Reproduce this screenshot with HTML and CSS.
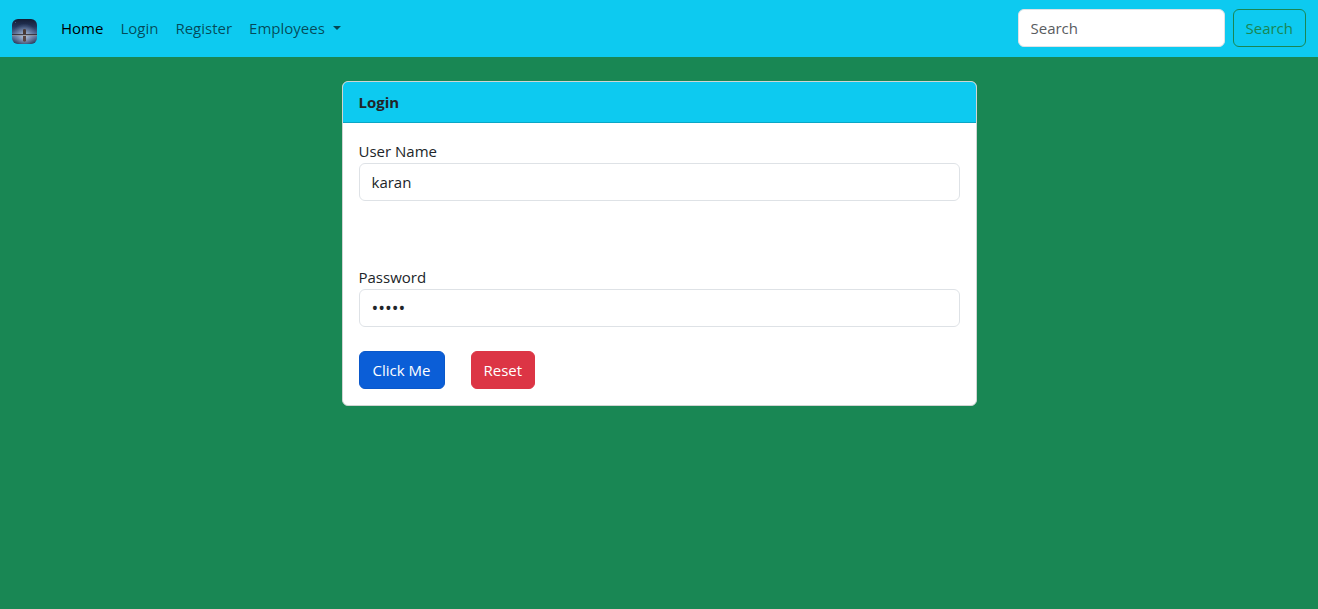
FILE: index.html
```html
<!DOCTYPE html>
<html lang="en">
<head>
<meta charset="utf-8">
<meta name="viewport" content="width=device-width, initial-scale=1">
<title>Login</title>
<link rel="stylesheet" href="styles.css">
</head>
<body>
<nav class="navbar">
  <a class="brand" href="#" aria-label="Start page">
    <svg class="brand-logo" viewBox="0 0 25 25" aria-hidden="true">
      <defs>
        <linearGradient id="sky" x1="0" y1="0" x2="0" y2="1">
          <stop offset="0" stop-color="#141c33"/>
          <stop offset="0.3" stop-color="#24355a"/>
          <stop offset="0.6" stop-color="#53688f"/>
          <stop offset="0.7" stop-color="#5d7299"/>
          <stop offset="1" stop-color="#1f2f50"/>
        </linearGradient>
        <radialGradient id="glow" cx="0.5" cy="0.68" r="0.5">
          <stop offset="0" stop-color="#c3d2e8" stop-opacity="0.9"/>
          <stop offset="1" stop-color="#8ba3c8" stop-opacity="0"/>
        </radialGradient>
      </defs>
      <rect width="25" height="25" fill="url(#sky)"/>
      <rect width="25" height="25" fill="url(#glow)"/>
      <path d="M0 15h25v1H0z" fill="#332d32" opacity="0.85"/>
      <path d="M0 16h25v1H0z" fill="#9a948f" opacity="0.6"/>
      <path d="M11 10.500q1.500-1 3 0V15h-3z" fill="#4b3a34"/>
      <path d="M11 17h3v5q-1.500 1.500-3 0z" fill="#594641"/>
      <path d="M3 3h1v1H3z" fill="#3e5f7c"/>
    </svg>
  </a>
  <ul class="nav-list">
    <li><a class="nav-link active" href="#" aria-current="page">Home</a></li>
    <li><a class="nav-link" href="#">Login</a></li>
    <li><a class="nav-link" href="#">Register</a></li>
    <li><a class="nav-link dropdown" href="#" aria-haspopup="true">Employees</a></li>
  </ul>
  <form class="search" role="search">
    <input class="control search-box" type="search" placeholder="Search" aria-label="Search">
    <button class="btn btn-outline" type="submit">Search</button>
  </form>
</nav>
<main class="page">
  <section class="card">
    <h1 class="card-header">Login</h1>
    <form class="card-body">
      <div class="field">
        <label for="username">User Name</label>
        <input class="control" id="username" type="text" value="karan" autocomplete="username">
      </div>
      <div class="field">
        <label for="password">Password</label>
        <input class="control password" id="password" type="password" value="karan" autocomplete="current-password">
      </div>
      <div class="actions">
        <button class="btn btn-primary" type="button">Click Me</button>
        <button class="btn btn-danger" type="reset">Reset</button>
      </div>
    </form>
  </section>
</main>
</body>
</html>
```
FILE: styles.css
```css
*, *::before, *::after {
  box-sizing: border-box;
}

body {
  margin: 0;
  background: #198754;
  color: #212529;
  font-family: "Segoe UI", "Open Sans", "Noto Sans", sans-serif;
  font-size: 15px;
  font-weight: 400;
  line-height: 24px;
}

.navbar {
  display: flex;
  align-items: center;
  padding: 8px 12px 9px;
  background: #0dcaf0;
}

.brand {
  display: flex;
  margin-right: 16px;
  padding: 11px 0 4px;
}

.brand-logo {
  width: 25px;
  height: 25px;
  border-radius: 6px;
}

.nav-list {
  display: flex;
  flex: 1;
  gap: 1px;
  margin: 0;
  padding: 0;
  list-style: none;
}

.nav-link {
  display: block;
  padding: 8px;
  color: rgba(0, 0, 0, 0.65);
  text-decoration: none;
}

.nav-link.active {
  color: #000;
}

.dropdown::after {
  content: "";
  display: inline-block;
  margin-left: 8px;
  vertical-align: 4px;
  border: 4px solid transparent;
  border-top-color: currentColor;
  border-bottom: 0;
}

.search {
  display: flex;
  gap: 8px;
}

.control {
  display: block;
  width: 100%;
  height: 38px;
  padding: 6px 12px;
  border: 1px solid #dee2e6;
  border-radius: 6px;
  background: #fff;
  color: #212529;
  font: inherit;
  appearance: none;
}

.control::placeholder {
  color: #595c5f;
  opacity: 1;
}

.search-box {
  width: 207px;
}

.password {
  font-size: 18px;
}

.btn {
  padding: 6px 12px;
  border: 1px solid transparent;
  border-radius: 6px;
  font: inherit;
  color: #fff;
  cursor: pointer;
}

.btn-outline {
  border-color: #198754;
  background: transparent;
  color: #198754;
}

.btn-primary {
  min-width: 86px;
  border-color: #0a58ca;
  background: #0b5ed7;
}

.btn-danger {
  border-color: #dc3545;
  background: #dc3545;
}

.page {
  padding: 24px 12px;
}

.card {
  width: calc(50% - 12px);
  margin: 0 auto;
  border: 1px solid #d0d5d3;
  border-radius: 6px;
  background: #fff;
  overflow: hidden;
}

.card-header {
  margin: 0;
  padding: 8px 16px;
  border-bottom: 1px solid #0ba6c5;
  background: #0dcaf0;
  font-size: 15px;
  font-weight: 700;
}

.card-body {
  padding: 16px;
}

.field + .field {
  margin-top: 64px;
}

.field label {
  display: block;
}

.actions {
  display: flex;
  gap: 26px;
  margin-top: 24px;
}
```
